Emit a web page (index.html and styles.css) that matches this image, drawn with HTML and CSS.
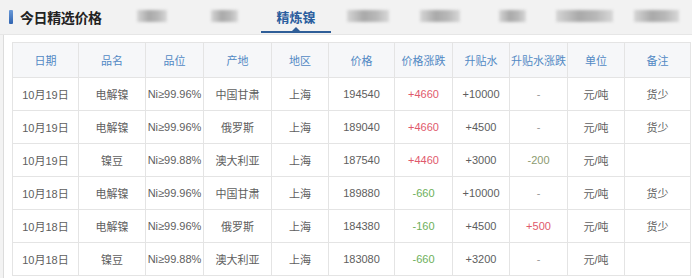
FILE: index.html
```html
<!DOCTYPE html>
<html lang="zh">
<head>
<meta charset="utf-8">
<link rel="stylesheet" href="styles.css">
</head>
<body>
<div class="topbar">
  <div class="title"><span class="marker"></span>今日精选价格</div>
  <div class="tabs">
    <div class="tab"><span class="blob w30"></span></div>
    <div class="tab"><span class="blob w27"></span></div>
    <div class="tab active">精炼镍</div>
    <div class="tab"><span class="blob w42"></span></div>
    <div class="tab"><span class="blob w40"></span></div>
    <div class="tab"><span class="blob w27"></span></div>
    <div class="tab"><span class="blob w57"></span></div>
    <div class="tab"><span class="blob w45"></span></div>
  </div>
</div>
<div class="panel">
  <table class="prices">
    <colgroup>
      <col class="c66"><col class="c67"><col class="c58"><col class="c68"><col class="c57"><col class="c66"><col class="c58"><col class="c57"><col class="c58"><col class="c57"><col>
    </colgroup>
    <thead>
      <tr><th>日期</th><th>品名</th><th>品位</th><th>产地</th><th>地区</th><th>价格</th><th>价格涨跌</th><th>升贴水</th><th>升贴水涨跌</th><th>单位</th><th>备注</th></tr>
    </thead>
    <tbody>
      <tr><td>10月19日</td><td>电解镍</td><td>Ni≥99.96%</td><td>中国甘肃</td><td>上海</td><td>194540</td><td class="up">+4660</td><td>+10000</td><td class="dash">-</td><td>元/吨</td><td>货少</td></tr>
      <tr><td>10月19日</td><td>电解镍</td><td>Ni≥99.96%</td><td>俄罗斯</td><td>上海</td><td>189040</td><td class="up">+4660</td><td>+4500</td><td class="dash">-</td><td>元/吨</td><td>货少</td></tr>
      <tr><td>10月19日</td><td>镍豆</td><td>Ni≥99.88%</td><td>澳大利亚</td><td>上海</td><td>187540</td><td class="up">+4460</td><td>+3000</td><td class="olive">-200</td><td>元/吨</td><td></td></tr>
      <tr><td>10月18日</td><td>电解镍</td><td>Ni≥99.96%</td><td>中国甘肃</td><td>上海</td><td>189880</td><td class="down">-660</td><td>+10000</td><td class="dash">-</td><td>元/吨</td><td>货少</td></tr>
      <tr><td>10月18日</td><td>电解镍</td><td>Ni≥99.96%</td><td>俄罗斯</td><td>上海</td><td>184380</td><td class="down">-160</td><td>+4500</td><td class="up">+500</td><td>元/吨</td><td>货少</td></tr>
      <tr><td>10月18日</td><td>镍豆</td><td>Ni≥99.88%</td><td>澳大利亚</td><td>上海</td><td>183080</td><td class="down">-660</td><td>+3200</td><td class="dash">-</td><td>元/吨</td><td></td></tr>
    </tbody>
  </table>
</div>
</body>
</html>
```
FILE: styles.css
```css
html, body {
  margin: 0;
  padding: 0;
  background: #f3f3f3;
  font-family: "Noto Sans", "Noto Sans CJK SC", sans-serif;
  width: 692px;
  height: 278px;
  overflow: hidden;
}
.topbar {
  height: 35px;
  display: flex;
  align-items: stretch;
  background: #f2f2f2;
  border-bottom: 1px solid #e6e6e6;
  box-sizing: border-box;
}
.title {
  display: flex;
  align-items: center;
  width: 117px;
  padding-left: 9px;
  box-sizing: border-box;
  font-family: "Noto Sans CJK SC", sans-serif;
  font-size: 14px;
  font-weight: bold;
  color: #222;
  letter-spacing: -0.4px;
}
.marker {
  width: 4px;
  height: 14px;
  border-radius: 1px;
  background: linear-gradient(#6a9ad8, #2f63b0);
  margin-right: 7px;
}
.tabs {
  display: flex;
}
.tab {
  width: 72px;
  display: flex;
  align-items: center;
  justify-content: center;
  position: relative;
  font-family: "Noto Sans CJK SC", sans-serif;
  font-size: 13px;
  font-weight: bold;
  color: #2b5e9e;
  padding-bottom: 1px;
}
.tab.active::after {
  content: "";
  position: absolute;
  left: 1px;
  right: 1px;
  bottom: 1px;
  height: 2px;
  background: #2f5e98;
}
.tab.active::before {
  content: "";
  position: absolute;
  left: 50%;
  bottom: 3px;
  margin-left: -4px;
  border-left: 4px solid transparent;
  border-right: 4px solid transparent;
  border-bottom: 4px solid #2f5e98;
}
.blob {
  display: block;
  height: 12px;
  margin-top: -2px;
  background: linear-gradient(90deg, #d6d6d6, #a9a9a9 40%, #b8b8b8 70%, #d8d8d8);
  filter: blur(1.5px);
}
.w30 { width: 30px; }
.w27 { width: 27px; }
.w42 { width: 42px; }
.w40 { width: 40px; }
.w57 { width: 57px; }
.w45 { width: 45px; }
.panel {
  margin-left: 3px;
  border-left: 1px solid #dcdcdc;
  background: #fff;
  height: 243px;
  padding: 7px 0 0 8px;
  box-sizing: border-box;
}
.prices {
  border-collapse: collapse;
  width: 679px;
  table-layout: fixed;
  font-family: "Liberation Sans", "Noto Sans CJK SC", sans-serif;
  font-size: 11px;
  color: #5e5e5e;
}
.c66 { width: 66px; }
.c67 { width: 67px; }
.c68 { width: 68px; }
.c58 { width: 58px; }
.c57 { width: 57px; }
.prices th, .prices td {
  border: 1px solid #e4e4e4;
  text-align: center;
  padding: 0;
  white-space: nowrap;
}
.prices th {
  height: 34px;
  background: #f6f7f9;
  color: #5289c4;
  font-weight: normal;
}
.prices td {
  height: 32px;
}
.up { color: #df5a6c; }
.down { color: #6db05a; }
.olive { color: #8c9a70; }
.dash { color: #999; }
```
